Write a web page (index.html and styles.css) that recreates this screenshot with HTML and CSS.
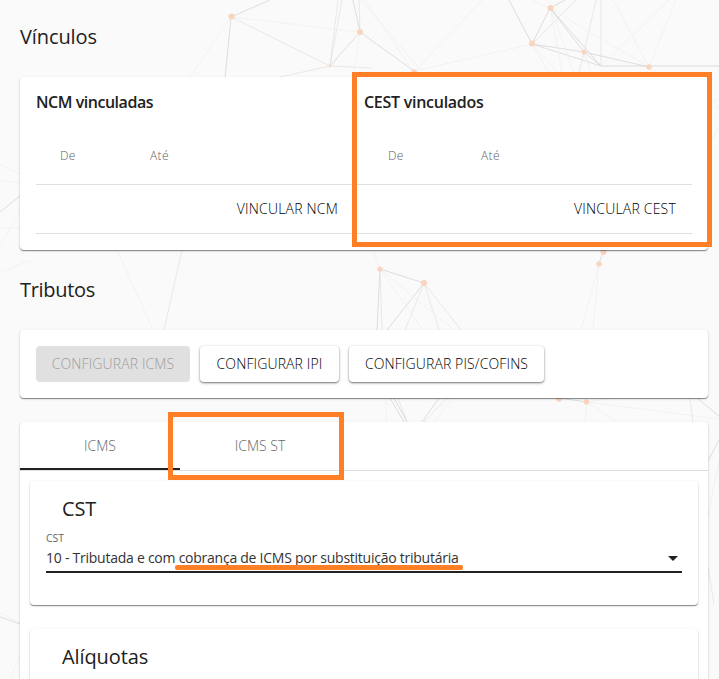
FILE: index.html
```html
<!DOCTYPE html>
<html lang="pt-BR">
<head>
<meta charset="utf-8">
<title>Vínculos e tributos</title>
<link rel="stylesheet" href="styles.css">
</head>
<body>
<svg class="network" width="719" height="679" viewBox="0 0 719 679" fill="none" aria-hidden="true">
  <g stroke="#cecece" stroke-width=".65">
    <path d="M231 17 225 78M231 17 270 0M330 66 360 32 353 0M360 32 414 71M532 44 550 8 584 52 649 67M532 44 584 52 601 66M550 8 601 66 719 66M532 44 601 66M532 44 509 0M550 8 565 0M380 269 424 283 387 330M380 269 377 330M603 251 599 264M390 398 404 422M394 398 407 422M439 398 422 422M559 398 587 402M697 398 719 416M708 461 719 440M0 212 20 196M0 617 20 624"/>
    <path stroke="#dedede" d="M231 17 330 66M330 66 338 0M330 66 342 0M330 66 280 77M330 66 372 68M360 32 359 0M532 44 576 0M584 52 596 0M584 52 579 73M601 66 601 0M424 283 405 330M424 283 439 330M424 283 461 330M380 269 382 330M182 250 164 330M398 398 407 422M447 398 424 422M690 398 693 422M708 567 714 604"/>
  </g>
  <g stroke="#f0f0f0" stroke-width=".8">
    <path d="M231 17 360 32M231 17 190 77M360 32 353 77M414 71 532 44M418 67 361 0M410 67 365 0M415 71 482 0M550 8 532 0M532 44 562 77M532 44 551 77M550 8 563 77M550 8 576 77M550 8 649 67 676 0M584 52 592 77M601 66 669 0M649 67 613 0M649 67 655 77M649 67 719 110M709 146 719 127M709 94 719 108M709 105 719 99M380 269 372 248M380 269 423 330M380 269 454 330M599 264 581 330M599 264 593 330M0 165 20 174M0 181 20 182M0 228 20 228M0 246 20 211M0 273 30 260M117 250 153 330M386 398 386 422M453 398 434 422M587 402 610 398M587 402 585 422M587 402 616 422M587 402 719 419M708 516 719 461M0 613 20 623M10 679 20 656"/>
  </g>
  <g fill="#f9d5bd">
    <circle cx="231.500" cy="16.500" r="3.100"/><circle cx="360" cy="32" r="3"/><circle cx="414" cy="72" r="2.800"/><circle cx="550.500" cy="8" r="3"/><circle cx="532" cy="43.500" r="3"/><circle cx="584" cy="52" r="2.500"/><circle cx="649" cy="67" r="2.800"/><circle cx="380" cy="269" r="2.600"/><circle cx="424" cy="283" r="3"/><circle cx="603.500" cy="252" r="3"/><circle cx="599" cy="264" r="2.700"/><circle cx="559" cy="399" r="2.800"/><circle cx="586.500" cy="402" r="2.800"/><circle cx="330" cy="66" r="1.200"/>
  </g>
</svg>

<main class="page">
  <h1 class="section-title">Vínculos</h1>
  <section class="card links">
    <div class="link-group">
      <h2 class="group-title ncm-title">NCM vinculadas</h2>
      <div class="columns"><span>De</span><span>Até</span></div>
      <div class="action ncm-action"><button class="link-button">VINCULAR NCM</button></div>
    </div>
    <div class="link-group">
      <h2 class="group-title cest-title">CEST vinculados</h2>
      <div class="columns cest-columns"><span>De</span><span>Até</span></div>
      <div class="action"><button class="link-button">VINCULAR CEST</button></div>
      <div class="marker marker-cest"></div>
    </div>
  </section>

  <h1 class="section-title second-title">Tributos</h1>
  <section class="card toolbar">
    <button class="button button-icms" disabled>CONFIGURAR ICMS</button>
    <button class="button button-ipi">CONFIGURAR IPI</button>
    <button class="button button-pis">CONFIGURAR PIS/COFINS</button>
  </section>

  <section class="card taxes">
    <nav class="tabs">
      <button class="tab active">ICMS</button>
      <button class="tab">ICMS ST<span class="marker marker-tab"></span></button>
    </nav>
    <section class="card panel">
      <h2 class="panel-title">CST</h2>
      <div class="field">
        <span class="field-label">CST</span>
        <div class="select">
          <span class="value">10 - Tributada e com <span class="marked">cobrança de ICMS por substituição tributária</span></span>
          <svg width="10" height="5" viewBox="0 0 10 5"><path d="M0 0h10L5 5z" fill="#212121"/></svg>
        </div>
      </div>
    </section>
    <section class="card panel rates">
      <h2 class="panel-title">Alíquotas</h2>
    </section>
  </section>
</main>
</body>
</html>
```

FILE: styles.css
```css
* { box-sizing: border-box; }
body {
  margin: 0;
  height: 679px;
  overflow: hidden;
  position: relative;
  background: #fafafa;
  color: #212121;
  font: 300 14px/20px "Open Sans", "Noto Sans", sans-serif;
}
h1, h2 { margin: 0; font-weight: inherit; }
button { font: inherit; color: inherit; border: 0; padding: 0; background: none; white-space: nowrap; }
.network { position: absolute; left: 0; top: 0; }
.page { position: relative; height: 679px; overflow: hidden; padding: 21px 11px 0 20px; }
.card {
  background: #fff;
  border-radius: 4px;
  box-shadow: 0 1px 1px rgba(0, 0, 0, .42), 0 1px 3px rgba(0, 0, 0, .12);
}
.section-title { font-size: 20px; line-height: 32px; font-weight: 400; letter-spacing: -.1px; }

.links { margin-top: 24px; height: 173px; padding: 15px 16px; display: grid; grid-template-columns: 1fr 1fr; }
.link-group { position: relative; }
.group-title { font-size: 16px; line-height: 20px; height: 36px; font-weight: 600; letter-spacing: -.47px; }
.cest-title { letter-spacing: -.27px; }
.columns {
  display: grid;
  grid-template-columns: 90px 1fr;
  height: 57px;
  padding-left: 24px;
  line-height: 56px;
  font-size: 12px;
  letter-spacing: .4px;
  color: #616161;
  border-bottom: 1px solid #e0e0e0;
}
.cest-columns { grid-template-columns: 93px 1fr; }
.action { display: flex; justify-content: flex-end; height: 49px; padding-right: 16px; border-bottom: 1px solid #e0e0e0; }
.ncm-action { padding-right: 26px; }
.link-button { color: #000; letter-spacing: .2px; }
.marker { position: absolute; border: 5px solid #ff7f27; pointer-events: none; }
.marker-cest { left: -12px; top: -20px; width: 360px; height: 175px; }

.second-title { margin-top: 24px; letter-spacing: -.3px; }
.toolbar { margin-top: 24px; height: 68px; padding: 16px; display: flex; gap: 10px; }
.button {
  height: 36px;
  border-radius: 4px;
  background: #fff;
  color: #000;
  letter-spacing: .12px;
  box-shadow: 0 1px 2px rgba(0, 0, 0, .48), 0 1px 4px rgba(0, 0, 0, .12);
}
.button-icms { width: 154px; background: #e0e0e0; color: #9c9c9c; box-shadow: none; }
.button-ipi { width: 139px; }
.button-pis { width: 195px; }

.taxes { margin-top: 24px; height: 320px; }
.tabs { display: flex; height: 49px; border-bottom: 1px solid #dedede; color: #666; }
.tab { position: relative; width: 160px; height: 48px; }
.active { border-bottom: 2px solid #212121; padding-top: 2px; }
.marker-tab { left: -12px; top: -10px; width: 176px; height: 68px; }

.panel { margin: 10px 10px 0; height: 124px; padding: 12px 16px; }
.panel-title { padding-left: 16px; font-size: 20px; line-height: 32px; font-weight: 400; letter-spacing: -.1px; }
.field-label { display: block; margin-top: 6px; font-size: 10.500px; line-height: 14px; color: #666; font-weight: 400; }
.select {
  display: flex;
  align-items: center;
  justify-content: space-between;
  height: 28px;
  padding-right: 4px;
  border-bottom: 2px solid #212121;
}
.value { font-size: 14px; font-weight: 400; letter-spacing: -.25px; color: #333; }
.marked { position: relative; }
.marked::after {
  content: "";
  position: absolute;
  left: -4px;
  right: -5px;
  bottom: -3px;
  height: 5px;
  border-radius: 2px;
  background: #ff7f27;
}
.rates { margin-top: 24px; }
```
